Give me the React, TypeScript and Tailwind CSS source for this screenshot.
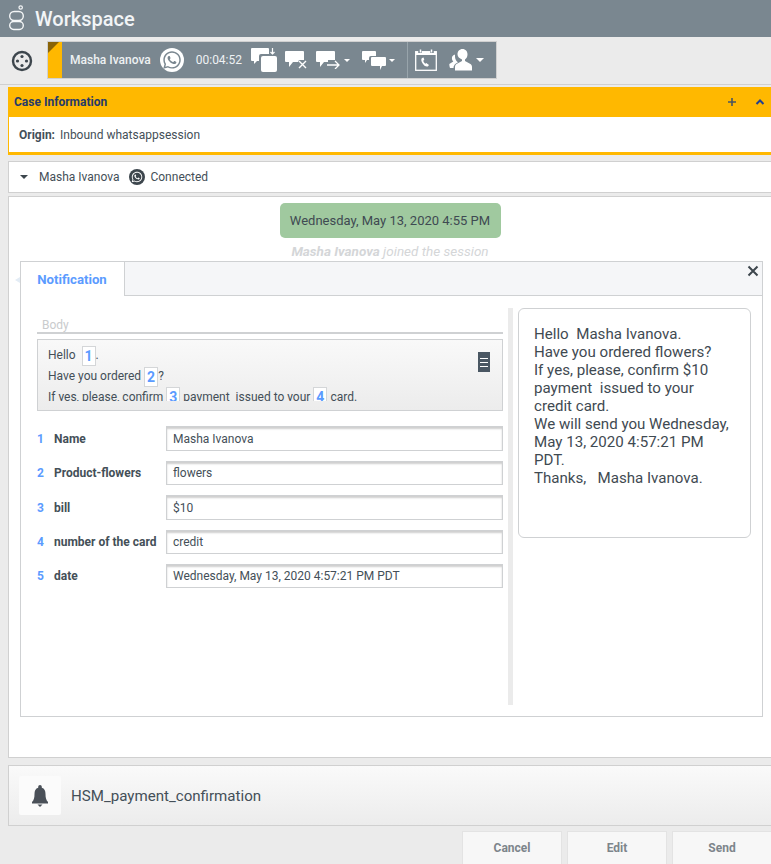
import { FaWhatsapp } from "react-icons/fa";

const fields = [
  { n: 1, label: "Name", value: "Masha Ivanova", h: "h-[25px]" },
  { n: 2, label: "Product-flowers", value: "flowers", h: "h-[24px]" },
  { n: 3, label: "bill", value: "$10", h: "h-[25px]" },
  { n: 4, label: "number of the card", value: "credit", h: "h-[24px]" },
  { n: 5, label: "date", value: "Wednesday, May 13, 2020 4:57:21 PM PDT", h: "h-[24px]" },
];

function Slot({ n }: { n: number }) {
  return (
    <span className="inline-block border border-[#d4d6d8] bg-white px-[2px] h-[20px] leading-[18px] font-bold text-[#5b9bff] text-[14px] align-middle">
      {n}
    </span>
  );
}

function Caret() {
  return <span className="block w-0 h-0 border-x-[3px] border-x-transparent border-t-[3px] border-t-white" />;
}

export default function App() {
  return (
    <div className="w-[771px] h-[864px] overflow-hidden bg-[#ebebeb] text-[#444f58] text-[12px]" style={{ fontFamily: "Roboto, sans-serif" }}>
      {/* Header */}
      <div className="h-[37px] bg-[#7a8790] flex items-center pl-[8px] text-white">
        <svg width="18" height="30" viewBox="0 0 18 30" className="text-[#f4f6f7]">
          <circle cx="12.700" cy="3.500" r="1.700" fill="none" stroke="currentColor" strokeWidth="1.200" />
          <rect x="1.700" y="7.500" width="13.600" height="9" rx="4.500" fill="none" stroke="currentColor" strokeWidth="1.400" />
          <rect x="1.700" y="17.500" width="13.600" height="8" rx="4" fill="none" stroke="currentColor" strokeWidth="1.400" />
        </svg>
        <span className="ml-[9px] text-[20px] font-medium text-[#f2f5f7]">Workspace</span>
      </div>

      {/* Interaction bar */}
      <div className="h-[48px] border-b border-[#d0d0d0] flex items-center">
        <div className="w-[47px] flex justify-center pr-[3px]">
          <svg width="22" height="22" viewBox="0 0 22 22">
            <circle cx="11" cy="11" r="9" fill="none" stroke="#3d464d" strokeWidth="2.400" />
            <circle cx="11" cy="6.500" r="1.600" fill="#3d464d" />
            <circle cx="11" cy="15.500" r="1.600" fill="#3d464d" />
            <circle cx="6.500" cy="11" r="1.600" fill="#3d464d" />
            <circle cx="15.500" cy="11" r="1.600" fill="#3d464d" />
          </svg>
        </div>
        <div className="w-[450px] h-[38px] flex bg-[#7a8790] border border-[#d0d0d0] mt-[-1px]">
          <div className="relative w-[14px] bg-[#ffb800]">
            <span className="absolute left-0 top-0 w-0 h-0 border-t-[11px] border-t-[#8a6408] border-r-[11px] border-r-transparent" />
          </div>
          <div className="flex items-center flex-1 text-[#eef1f3]">
            <span className="ml-[8px] font-medium">Masha Ivanova</span>
            <span className="ml-[9px] w-[24px] h-[24px] rounded-full bg-white flex items-center justify-center">
              <FaWhatsapp className="text-[#7a8790] text-[20px]" />
            </span>
            <span className="ml-[12px]">00:04:52</span>

            {/* Switch chat */}
            <svg width="26" height="26" viewBox="0 0 26 26" className="ml-[9px]">
              <path d="M1 1h16a1 1 0 0 1 1 1v5h-8a2 2 0 0 0-2 2v5H6l-3 3v-3H1a1 1 0 0 1-1-1V2a1 1 0 0 1 1-1z" fill="white" />
              <rect x="10" y="9" width="16" height="16" rx="2" fill="white" />
              <path d="M21.500 1v6m-2-2l2 2 2-2" stroke="white" strokeWidth="1.200" fill="none" />
            </svg>
            {/* End chat */}
            <svg width="22" height="18" viewBox="0 0 22 18" className="ml-[8px]">
              <path d="M1 0h17a1 1 0 0 1 1 1v8h-5l-1 2H8l-4 5v-5H1a1 1 0 0 1-1-1V1a1 1 0 0 1 1-1z" fill="white" />
              <path d="M14 10l7 7m0-7l-7 7" stroke="white" strokeWidth="1.400" />
            </svg>
            {/* Transfer */}
            <svg width="24" height="18" viewBox="0 0 24 18" className="ml-[9px]">
              <path d="M1 0h17a1 1 0 0 1 1 1v8H12v2H8l-4 5v-5H1a1 1 0 0 1-1-1V1a1 1 0 0 1 1-1z" fill="white" />
              <path d="M11 14h12m-4-4l4 4-4 4" stroke="white" strokeWidth="1.300" fill="none" />
            </svg>
            <span className="ml-[4px]"><Caret /></span>
            {/* Consult */}
            <svg width="24" height="19" viewBox="0 0 24 19" className="ml-[12px]">
              <path d="M1 0h12a1 1 0 0 1 1 1v4H9a2 2 0 0 0-2 2v2H5l-2 3V9H1a1 1 0 0 1-1-1V1a1 1 0 0 1 1-1z" fill="white" />
              <path d="M10 6h13a1 1 0 0 1 1 1v7a1 1 0 0 1-1 1h-3l-2 4v-4h-8a1 1 0 0 1-1-1V7a1 1 0 0 1 1-1z" fill="white" />
            </svg>
            <span className="ml-[3px]"><Caret /></span>
            <span className="ml-[12px] w-[1px] h-[36px] bg-[#98a4ab]" />
            {/* Callback calendar */}
            <svg width="22" height="22" viewBox="0 0 22 22" className="ml-[7px]">
              <rect x="0.700" y="2.700" width="20.600" height="18.600" fill="none" stroke="white" strokeWidth="1.300" />
              <path d="M1 3h20v3H1z" fill="white" />
              <path d="M5 0v4m12-4v4" stroke="#7a8790" strokeWidth="3.500" />
              <path d="M5.500 0.500v3m11-3v3" stroke="white" strokeWidth="1.500" />
              <path d="M7 9c-1.200 1-.8 3 .5 5.300s3.300 3.700 5.300 3.200l1.200-1.500-2.700-2-1 .8c-1-.6-1.900-2-2-3.200l1-.7-.7-2.500z" fill="white" />
            </svg>
            {/* Contact */}
            <svg width="23" height="22" viewBox="0 0 23 22" className="ml-[12px]">
              <path d="M13.500 0c3 0 5 2.300 5 5.300 0 2.300-1 4.300-2.500 5.200V12l5 2.800c1.200.7 2 1.700 2 3.200v3.500H6V18c0-1.500.8-2.500 2-3.200l5-2.800v-1.500C10.500 9.600 8.500 7.600 8.500 5.300 8.500 2.300 10.500 0 13.500 0z" fill="white" />
              <path d="M6 5.500C3.500 6 2.500 8 3 10.300c.2 1 .7 1.800 1.300 2.300l-4 2.400c0 1.300.2 2.500.7 4h3.500c0-2 1-3.500 2.500-4.500l2-1.200c-1.500-1-2.500-2.500-2.800-4C6 8 5.900 6.500 6 5.500z" fill="white" />
            </svg>
            <span className="ml-[4px] block w-0 h-0 border-x-[4px] border-x-transparent border-t-[4px] border-t-white" />
          </div>
        </div>
      </div>

      {/* Case information */}
      <div className="ml-[8px] mt-[2px] h-[68px] border-b-[3px] border-b-[#ffb800] border-l border-l-[#ffb800] bg-white">
        <div className="h-[30px] bg-[#ffb800] flex items-center pl-[5px] pr-[6px] justify-between">
          <span className="font-bold text-[#273a6a]">Case Information</span>
          <div className="flex items-center gap-[18px]">
            <svg width="10" height="10" viewBox="0 0 10 10"><path d="M5 1v8M1 5h8" stroke="#4a5560" strokeWidth="1.600" /></svg>
            <svg width="10" height="8" viewBox="0 0 10 8"><path d="M1.500 6L5 2.500 8.500 6" stroke="#23408f" strokeWidth="2" fill="none" /></svg>
          </div>
        </div>
        <div className="h-[35px] flex items-center pl-[10px]">
          <span className="font-bold mr-[5px]">Origin:</span>
          <span>Inbound whatsappsession</span>
        </div>
      </div>

      {/* Contact row */}
      <div className="ml-[8px] mt-[6px] h-[32px] bg-white border border-r-0 border-[#d0d0d0] flex items-center pl-[11px]">
        <span className="w-0 h-0 border-x-[4px] border-x-transparent border-t-[4px] border-t-[#3d464d]" />
        <span className="ml-[11px]">Masha Ivanova</span>
        <span className="ml-[10px] w-[16px] h-[16px] rounded-full bg-[#3d464d] flex items-center justify-center">
          <FaWhatsapp className="text-white text-[12px]" />
        </span>
        <span className="ml-[5px]">Connected</span>
      </div>

      {/* Transcript */}
      <div className="ml-[8px] mt-[3px] h-[562px] bg-white border border-r-0 border-[#d0d0d0]">
        <div className="flex justify-center mt-[6px]">
          <div className="w-[221px] h-[35px] rounded-[5px] bg-[#a0c99f] flex items-center justify-center text-[13px] text-[#3f4a52]">
            Wednesday, May 13, 2020 4:55 PM
          </div>
        </div>
        <div className="text-center h-[23px] leading-[26px] text-[13.500px] italic text-[#d4d6d8]">
          <b>Masha Ivanova</b> joined the session
        </div>

        {/* Notification card */}
        <div className="ml-[11px] w-[743px] h-[456px] border border-[#cfd1d3] relative">
          <span className="absolute left-[-6px] top-[15px] w-0 h-0 border-y-[3px] border-y-transparent border-r-[5px] border-r-[#e3ecf5]" />
          <div className="h-[34px] flex bg-[#f5f6f8] border-b border-[#cfd1d3]">
            <div className="w-[104px] h-[34px] bg-white border-r border-[#cfd1d3] flex items-center justify-center pr-[1px] pt-[2px] text-[13.200px] font-bold text-[#5b9bff]">
              Notification
            </div>
            <div className="flex-1 flex justify-end pr-[3px] pt-[3px]">
              <svg width="12" height="12" viewBox="0 0 12 12"><path d="M1.500 1.500l9 9m0-9l-9 9" stroke="#3d464d" strokeWidth="2" /></svg>
            </div>
          </div>

          <div className="flex h-[420px]">
            {/* Form column */}
            <div className="w-[466px] ml-[16px] pt-[22px]">
              <div className="h-[14px] pl-[5px] leading-[15px] text-[#c9cbcd]">Body</div>
              <div className="h-[2px] bg-[#cfd1d3]" />
              <div className="mt-[5px] h-[72px] border border-[#cfd1d3] bg-gradient-to-b from-[#f9f9f9] to-[#ececec] relative pl-[10px] pt-[5px] leading-[20px]">
                <div className="h-[56px] overflow-hidden">
                  <div>Hello &nbsp;<Slot n={1} />.</div>
                  <div>Have you ordered <Slot n={2} />?</div>
                  <div>If yes, please, confirm <Slot n={3} /> payment &nbsp;issued to your <Slot n={4} /> card.</div>
                </div>
                <span className="absolute right-[12px] top-[12px] w-[12px] h-[20px] bg-[#4a5763] flex flex-col justify-center gap-[3px] px-[2px]">
                  <span className="h-[1px] bg-white" />
                  <span className="h-[1px] bg-white" />
                  <span className="h-[1px] bg-white" />
                </span>
              </div>
              <div className="mt-[15px] flex flex-col gap-[10px]">
                {fields.map((f) => (
                  <div key={f.n} className="flex items-center">
                    <span className="w-[17px] font-bold text-[#5b9bff]">{f.n}</span>
                    <span className="w-[112px] font-bold">{f.label}</span>
                    <div className={`w-[337px] ${f.h} border border-[#cfd1d3] shadow-[inset_0_2px_2px_#cfcfcf] flex items-center pl-[6px] bg-white`}>
                      {f.value}
                    </div>
                  </div>
                ))}
              </div>
            </div>

            {/* Divider */}
            <div className="w-[5px] ml-[5px] mt-[12px] h-[397px] bg-[#ebebeb]" />

            {/* Preview */}
            <div className="ml-[5px] mt-[12px] w-[233px] h-[230px] border border-[#cfd1d3] rounded-[6px] pl-[15px] pr-[19px] pt-[16px] text-[15.100px] leading-[18px] text-[#3f4a52]">
              <div>Hello &nbsp;Masha Ivanova.</div>
              <div>Have you ordered flowers?</div>
              <div>If yes, please, confirm $10 payment &nbsp;issued to your credit card.</div>
              <div>We will send you Wednesday, May 13, 2020 4:57:21 PM PDT.</div>
              <div>Thanks, &nbsp; Masha Ivanova.</div>
            </div>
          </div>
        </div>
      </div>

      {/* Template bar */}
      <div className="ml-[8px] mt-[7px] h-[61px] border border-r-0 border-[#d0d0d0] bg-gradient-to-b from-[#fafafa] to-[#ececec] flex items-center pl-[10px]">
        <div className="w-[42px] h-[39px] rounded-[2px] bg-[#fbfbfb] flex items-center justify-center">
          <svg width="16" height="22" viewBox="0 0 16 22">
            <path d="M8 0a1.800 1.800 0 0 1 1.800 1.800v1C12.500 3.500 13.500 6 13.500 9c0 3.500.5 6 2.500 8v1.500H0V17c2-2 2.500-4.500 2.500-8 0-3 1-5.500 3.700-6.200v-1A1.800 1.800 0 0 1 8 0z" fill="#4a5058" />
            <path d="M5.500 19.500h5L8 22z" fill="#4a5058" />
          </svg>
        </div>
        <span className="ml-[10px] pt-[1px] text-[15.100px]">HSM_payment_confirmation</span>
      </div>

      {/* Actions */}
      <div className="flex justify-end gap-[5px] mt-[5px] mr-[-1px]">
        {["Cancel", "Edit", "Send"].map((b) => (
          <div key={b} className="w-[100px] h-[33px] bg-[#f7f7f7] border border-b-0 border-[#e3e3e3] flex items-center justify-center font-bold text-[#7d858b]">
            {b}
          </div>
        ))}
      </div>
    </div>
  );
}
